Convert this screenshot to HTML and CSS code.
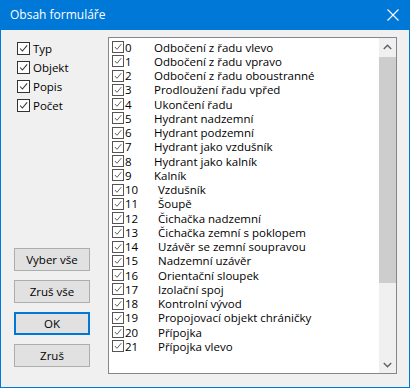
FILE: index.html
```html
<!DOCTYPE html>
<html lang="cs">
<head>
  <meta charset="UTF-8" />
  <title>Obsah formuláře</title>
  <link rel="stylesheet" href="styles.css">
</head>
<body>
  <div class="window">
    <div class="titlebar">
      <span class="title">Obsah formuláře</span>
      <svg class="close" width="12" height="12" viewBox="0 0 12 12">
        <path d="M0.5 0.5 L11.5 11.5 M11.5 0.5 L0.5 11.5" stroke="#fff" stroke-width="1.1" fill="none"/>
      </svg>
    </div>

    <div class="client">
      <div class="side">
        <div class="options">
          <label class="opt"><span class="box"><svg viewBox="0 0 13 13"><path d="M2.5 6.5 L5.2 9.5 L10.8 2.8" /></svg></span>Typ</label>
          <label class="opt"><span class="box"><svg viewBox="0 0 13 13"><path d="M2.5 6.5 L5.2 9.5 L10.8 2.8" /></svg></span>Objekt</label>
          <label class="opt"><span class="box"><svg viewBox="0 0 13 13"><path d="M2.5 6.5 L5.2 9.5 L10.8 2.8" /></svg></span>Popis</label>
          <label class="opt"><span class="box"><svg viewBox="0 0 13 13"><path d="M2.5 6.5 L5.2 9.5 L10.8 2.8" /></svg></span>Počet</label>
        </div>
        <div class="buttons">
          <button class="btn">Vyber vše</button>
          <button class="btn">Zruš vše</button>
          <button class="btn default">OK</button>
          <button class="btn">Zruš</button>
        </div>
      </div>

      <div class="listbox">
        <ul class="items" id="items"></ul>
        <div class="scrollbar">
          <div class="arrow up"><svg width="9" height="6" viewBox="0 0 9 6"><path d="M0.8 5 L4.5 1.3 L8.2 5" /></svg></div>
          <div class="track"><div class="thumb"></div></div>
          <div class="arrow down"><svg width="9" height="6" viewBox="0 0 9 6"><path d="M0.8 1 L4.5 4.7 L8.2 1" /></svg></div>
        </div>
      </div>
    </div>
  </div>

  <script>
    var names = [
      "Odbočení z řadu vlevo",
      "Odbočení z řadu vpravo",
      "Odbočení z řadu oboustranné",
      "Prodloužení řadu vpřed",
      "Ukončení řadu",
      "Hydrant nadzemní",
      "Hydrant podzemní",
      "Hydrant jako vzdušník",
      "Hydrant jako kalník",
      "Kalník",
      "Vzdušník",
      "Šoupě",
      "Čichačka nadzemní",
      "Čichačka zemní s poklopem",
      "Uzávěr se zemní soupravou",
      "Nadzemní uzávěr",
      "Orientační sloupek",
      "Izolační spoj",
      "Kontrolní vývod",
      "Propojovací objekt chráničky",
      "Přípojka",
      "Přípojka vlevo"
    ];
    var list = document.getElementById("items");
    names.forEach(function (name, i) {
      var li = document.createElement("li");
      li.className = "item" + (i > 9 ? " wide" : "");
      li.innerHTML = '<span class="box small"><svg viewBox="0 0 13 13"><path d="M2.5 6.5 L5.2 9.5 L10.8 2.8" /></svg></span>' +
        '<span class="num">' + i + '</span><span class="name">' + name + '</span>';
      list.appendChild(li);
    });
  </script>
</body>
</html>
```

FILE: styles.css
```css
body {
  margin: 0;
  padding: 0;
  background: #fff;
  font-family: "Open Sans", "Noto Sans", sans-serif;
  font-size: 11.5px;
  color: #000;
}

.window {
  width: 410px;
  height: 388px;
  box-sizing: border-box;
  border: 1px solid #0078d7;
  border-top: none;
  background: #f0f0f0;
  display: flex;
  flex-direction: column;
}

.titlebar {
  height: 30px;
  background: #0078d7;
  margin: 0 -1px;
  display: flex;
  align-items: center;
  justify-content: space-between;
  padding: 0 11px 0 10px;
  color: #fff;
  font-size: 12px;
}

.title {
  margin-top: -1px;
}

.close {
  display: block;
}

.client {
  flex: 1;
  display: flex;
}

.side {
  width: 107px;
  display: flex;
  flex-direction: column;
  justify-content: space-between;
}

.options {
  padding: 9px 0 0 16px;
  display: flex;
  flex-direction: column;
}

.opt {
  height: 19px;
  display: flex;
  align-items: center;
  gap: 3px;
}

.box {
  width: 13px;
  height: 13px;
  box-sizing: border-box;
  border: 1px solid #333;
  background: #fff;
  display: inline-block;
  flex: none;
}

.box svg {
  display: block;
  width: 11px;
  height: 11px;
}

.box path {
  fill: none;
  stroke: #333;
  stroke-width: 1.2;
}

.buttons {
  display: flex;
  flex-direction: column;
  gap: 9px;
  padding: 0 0 20px 13px;
}

.btn {
  width: 76px;
  height: 23px;
  box-sizing: border-box;
  border: 1px solid #adadad;
  background: #e1e1e1;
  font-family: inherit;
  font-size: 11.5px;
  color: #000;
  padding: 0;
}

.btn.default {
  border: 2px solid #0078d7;
}

.listbox {
  width: 289px;
  height: 337px;
  margin-top: 7px;
  box-sizing: border-box;
  border: 1px solid #828790;
  background: #fff;
  display: flex;
}

.items {
  flex: 1;
  list-style: none;
  margin: 0;
  padding: 2px 0 0 3px;
}

.item {
  height: 14.25px;
  display: flex;
  align-items: center;
  white-space: nowrap;
}

.box.small {
  width: 12px;
  height: 12px;
  border-color: #555;
}

.box.small svg {
  width: 10px;
  height: 10px;
}

.box.small path {
  stroke: #555;
}

.num {
  width: 29px;
  padding-left: 1px;
}

.wide .num {
  width: 33px;
}

.scrollbar {
  width: 17px;
  background: #f0f0f0;
  display: flex;
  flex-direction: column;
}

.arrow {
  height: 17px;
  display: flex;
  align-items: center;
  justify-content: center;
}

.arrow path {
  fill: none;
  stroke: #606060;
  stroke-width: 1.4;
}

.track {
  flex: 1;
  padding: 2px 0 0 0;
}

.thumb {
  height: 226px;
  background: #cdcdcd;
}
```
